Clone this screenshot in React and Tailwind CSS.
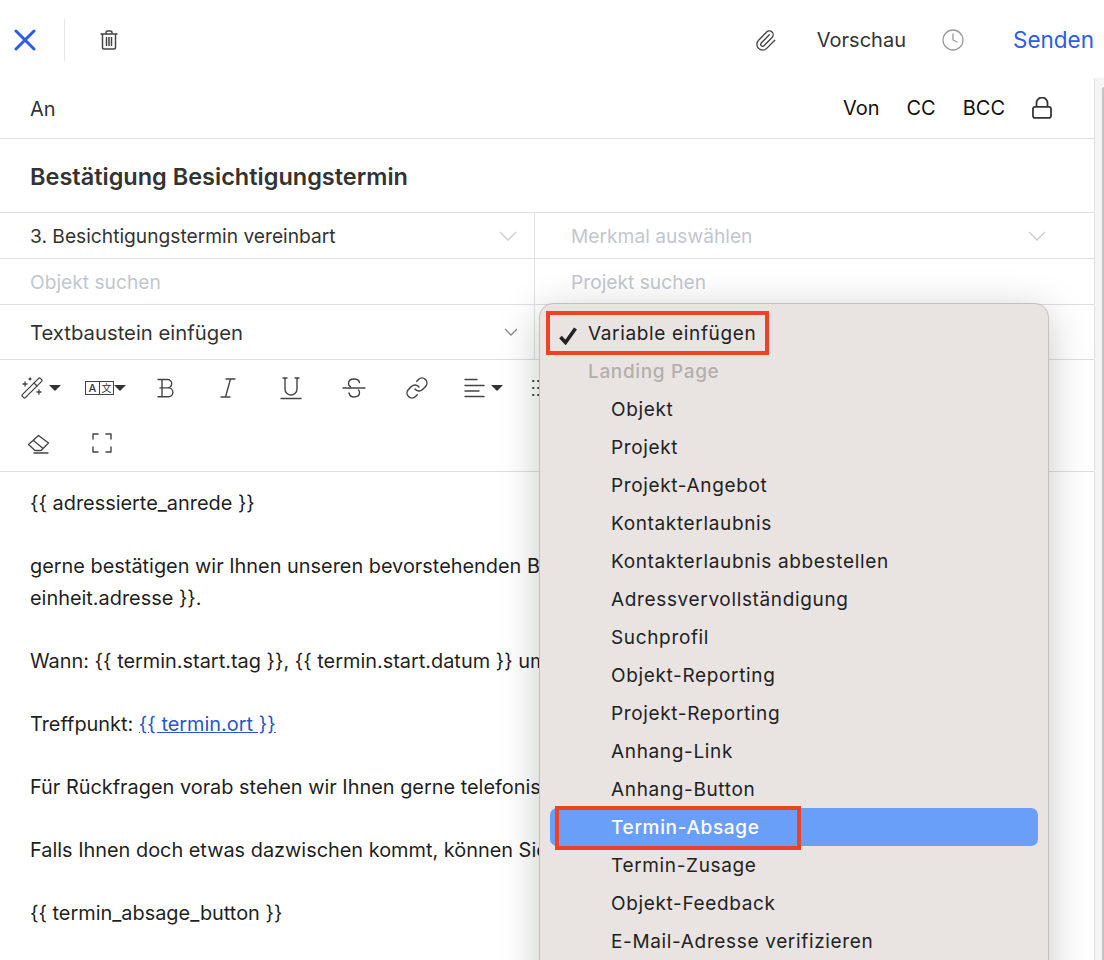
import { Clock, Link, Paperclip, WandSparkles } from 'lucide-react';

const menuItems = [
  'Objekt',
  'Projekt',
  'Projekt-Angebot',
  'Kontakterlaubnis',
  'Kontakterlaubnis abbestellen',
  'Adressvervollständigung',
  'Suchprofil',
  'Objekt-Reporting',
  'Projekt-Reporting',
  'Anhang-Link',
  'Anhang-Button',
  'Termin-Absage',
  'Termin-Zusage',
  'Objekt-Feedback',
  'E-Mail-Adresse verifizieren',
];

const Caret = ({ className = 'ml-[5px]' }) => (
  <span className={`h-0 w-0 border-x-[6px] border-t-[6px] border-x-transparent border-t-[#333] ${className}`} />
);

const ToolIcon = ({ children }) => (
  <svg viewBox="0 0 24 24" fill="none" stroke="#444" strokeWidth="1.4" strokeLinecap="round" strokeLinejoin="round" className="h-6 w-6">
    {children}
  </svg>
);

const CloseIcon = () => (
  <svg viewBox="0 0 22 22" fill="none" stroke="#2b5ce6" strokeWidth="3" strokeLinecap="round" className="h-[22px] w-[22px]">
    <path d="M2 2l18 18M20 2 2 20" />
  </svg>
);

const TrashIcon = () => (
  <svg viewBox="0 0 24 24" fill="none" stroke="#444" strokeWidth="1.5" strokeLinejoin="round" className="h-6 w-6">
    <path d="M3.500 6h17M9 6V4.500c0-.8.6-1.500 1.400-1.500h3.200c.8 0 1.400.7 1.400 1.500V6M5.500 6v13.500c0 1 .7 1.500 1.500 1.500h10c.8 0 1.500-.5 1.500-1.500V6" />
    <path d="M9.500 9v9M12 9v9M14.500 9v9" />
  </svg>
);

const LockIcon = () => (
  <svg viewBox="3 2 18 20" fill="none" stroke="#333" strokeWidth="1.6" className="h-[22px] w-5">
    <rect x="3.800" y="11" width="16.400" height="10" rx="2" />
    <path d="M7 11V7.500a5 5 0 0 1 10 0V11" />
  </svg>
);

const TranslateIcon = () => (
  <svg viewBox="0 0 29 14" className="h-[14px] w-[29px]" fill="none" stroke="#444" strokeWidth="1.100">
    <rect x="0.500" y="0.500" width="28" height="13" />
    <path d="M14.500 1v12" />
    <text x="7.500" y="11" textAnchor="middle" fontSize="11" fontWeight="500" fontFamily="Inter, sans-serif" fill="#333" stroke="none">A</text>
    <text x="21.500" y="11" textAnchor="middle" fontSize="10" fontFamily="'Noto Sans CJK SC', sans-serif" fill="#333" stroke="none">文</text>
  </svg>
);

const WideChevron = () => (
  <svg viewBox="0 0 18 10" fill="none" stroke="#c9ccd3" strokeWidth="1.300" className="h-[10px] w-[18px]">
    <path d="M1 1l8 8 8-8" />
  </svg>
);

const Field = ({ children, muted, chevron, className = '' }) => (
  <div className={`flex items-center justify-between ${className}`}>
    <span className={`pt-[2px] ${muted ? 'text-[#c3c6ce]' : 'text-[#333]'}`}>{children}</span>
    {chevron && <WideChevron />}
  </div>
);

export default function App() {
  return (
    <div className="relative h-[960px] w-[1104px] overflow-hidden bg-white font-['Inter',sans-serif] text-[#222]">
      <div className="h-full w-[1095px]">
        {/* top bar */}
        <header className="flex h-[78px] items-center pl-[14px] pr-[1px] pt-[2px]">
          <CloseIcon />
          <div className="ml-[28px] h-[42px] w-px bg-[#e8e8e8]" />
          <div className="ml-[32px]"><TrashIcon /></div>
          <div className="ml-auto flex items-center">
            <Paperclip className="h-[23px] w-[23px] text-[#444]" strokeWidth={1.4} />
            <span className="ml-[40px] text-[20px] text-[#333]">Vorschau</span>
            <Clock className="ml-[35px] h-6 w-6 text-[#999]" strokeWidth={1.3} />
            <span className="ml-[48px] text-[22.5px] text-[#2b5ce6]">Senden</span>
          </div>
        </header>

        <div className="h-[882px] border-r border-[#e2e2e6]">
          {/* recipients */}
          <div className="flex h-[61px] items-center border-b border-[#dfdfe3] pl-[30px] pr-[42px] pt-[2px] text-[20px]">
            <span className="text-[#333]">An</span>
            <div className="-mt-[2px] ml-auto flex items-center gap-[27px] text-[#111]">
              <span>Von</span>
              <span>CC</span>
              <span>BCC</span>
              <LockIcon />
            </div>
          </div>

          {/* subject */}
          <div className="flex h-[74px] items-center border-b border-[#dfdfe3] pl-[30px] pt-[2px] text-[23.5px] font-semibold text-[#333]">
            Bestätigung Besichtigungstermin
          </div>

          {/* selects */}
          <div className="grid h-[46px] grid-cols-[535px_1fr] border-b border-[#dfdfe3] text-[19.2px]">
            <Field chevron className="border-r border-[#e2e2e6] pl-[30px] pr-[17px]">3. Besichtigungstermin vereinbart</Field>
            <Field muted chevron className="pl-[36px] pr-[48px]">Merkmal auswählen</Field>
          </div>
          <div className="grid h-[46px] grid-cols-[535px_1fr] border-b border-[#dfdfe3] text-[19.2px]">
            <Field muted className="border-r border-[#e2e2e6] pl-[30px]">Objekt suchen</Field>
            <Field muted className="pl-[36px]">Projekt suchen</Field>
          </div>
          <div className="grid h-[55px] grid-cols-[535px_1fr] border-b border-[#dfdfe3] text-[20.3px]">
            <div className="flex items-center justify-between border-r border-[#e2e2e6] pl-[30px] pr-[10px]">
              <span className="pt-[2px] text-[#333]">Textbaustein einfügen</span>
              <svg viewBox="0 0 14 8" fill="none" stroke="#888" strokeWidth="1.300" className="mr-[6px] h-2 w-[14px]">
                <path d="M1 1l6 6 6-6" />
              </svg>
            </div>
            <div />
          </div>

          {/* editor toolbar */}
          <div className="h-[112px] border-b border-[#dfdfe3] pl-[20px]">
            <div className="flex h-[56px] items-center">
              <div className="flex w-[65px] items-center">
                <WandSparkles className="h-6 w-6 text-[#444]" strokeWidth={1.3} />
                <Caret />
              </div>
              <div className="flex w-[69px] items-center">
                <TranslateIcon />
                <Caret className="ml-0" />
              </div>
              <div className="w-[62px]">
                <ToolIcon><path d="M6 3.500h7.500a4.200 4.200 0 0 1 0 8.400H6M6 11.900h8.500a4.400 4.400 0 0 1 0 8.800H6M8 3.500v17.200M4 3.500h4M4 20.700h4" /></ToolIcon>
              </div>
              <div className="w-[63px]">
                <ToolIcon><path d="M10 3h9M5 21h9M14.500 3l-5 18" /></ToolIcon>
              </div>
              <div className="w-[63px]">
                <ToolIcon><path d="M4 2h4M16 2h4M6 2v11a6 6 0 0 0 12 0V2M2 22.500h20" /></ToolIcon>
              </div>
              <div className="w-[63px]">
                <ToolIcon><path d="M1 12h22M17.500 6.500C17 4 14.500 3 12 3 9 3 6.500 4.500 6.500 7.500c0 1.500.8 2.500 2 3.200M7 17c.5 2.500 2.500 4 5 4 3 0 5.500-1.500 5.500-4.500 0-1-.3-2-1-2.500" /></ToolIcon>
              </div>
              <div className="w-[57px]">
                <Link className="h-6 w-6 text-[#444]" strokeWidth={1.5} />
              </div>
              <div className="flex w-[68px] items-center">
                <ToolIcon><path d="M3 3.500h12M3 9.500h19M3 15h14M3 20.500h19" /></ToolIcon>
                <Caret />
              </div>
              <ToolIcon><path d="M3 5h.500M3 12h.500M3 19h.500M8 5h.500M8 12h.500M8 19h.500" strokeWidth="2" /></ToolIcon>
            </div>
            <div className="flex h-[53px] items-center pl-[7px]">
              <div className="w-[63px]">
                <ToolIcon>
                  <path d="M8 19.500 1.500 13.500 11.500 4.500l10 7.500-7.500 7.500zM6.500 9.500l9 7.500M7 22h14" />
                </ToolIcon>
              </div>
              <ToolIcon><path d="M3 8V3h5M16 3h5v5M21 16v5h-5M8 21H3v-5" /></ToolIcon>
            </div>
          </div>

          {/* message body, cut off by the open menu */}
          <div className="w-[539px] space-y-[31.5px] overflow-hidden whitespace-nowrap pl-[30px] pt-[16px] text-[19.9px] leading-[31.5px] text-[#1f1f1f]">
            <p>{'{{ adressierte_anrede }}'}</p>
            <p>gerne bestätigen wir Ihnen unseren bevorstehenden Besichtigungstermin<br />einheit.adresse {'}}'}.</p>
            <p>Wann: {'{{ termin.start.tag }}, {{ termin.start.datum }}'} um</p>
            <p>Treffpunkt: <span className="text-[#2a56c6] underline">{'{{ termin.ort }}'}</span></p>
            <p>Für Rückfragen vorab stehen wir Ihnen gerne telefonisch</p>
            <p>Falls Ihnen doch etwas dazwischen kommt, können Sie</p>
            <p>{'{{ termin_absage_button }}'}</p>
          </div>
        </div>
      </div>

      {/* scrollbar gutter */}
      <div className="absolute bottom-0 right-0 top-[78px] w-[9px] bg-[#f4f4f4]">
        <div className="absolute bottom-0 right-0 top-[9px] w-[2px] rounded-tl-full bg-[#c4c4c4]" />
      </div>

      {/* variable menu */}
      <div className="absolute left-[539px] top-[303px] h-[700px] w-[510px] rounded-t-[14px] border border-[#c4c1bf] bg-[#e9e4e2] pt-[11px] text-[19px] tracking-[0.65px] text-[#222] shadow-[0_8px_40px_rgba(0,0,0,0.22)]">
        <div className="flex h-[38px] items-center pl-[48px]">
          <svg viewBox="0 0 20 18" fill="none" stroke="#222" strokeWidth="3.600" className="absolute left-[18px] top-[23px] h-[18px] w-5">
            <path d="M2.500 10 7.500 15.500 17.500 1.500" />
          </svg>
          Variable einfügen
        </div>
        <div className="flex h-[38px] items-center pl-[48px] font-medium text-[#b3afad]">Landing Page</div>
        {menuItems.map((item) =>
          item === 'Termin-Absage' ? (
            <div key={item} className="relative -top-px mx-[10px] flex h-[38px] items-center rounded-[7px] bg-[#699ef9] pl-[61px] pt-[2px] font-medium text-white">{item}</div>
          ) : (
            <div key={item} className="flex h-[38px] items-center pl-[71px]">{item}</div>
          ),
        )}
      </div>

      {/* annotations */}
      <div className="absolute left-[546px] top-[311px] h-[44px] w-[223px] border-4 border-[#ee4225]" />
      <div className="absolute left-[555px] top-[806px] h-[44px] w-[246px] border-4 border-[#ee4225]" />
    </div>
  );
}
